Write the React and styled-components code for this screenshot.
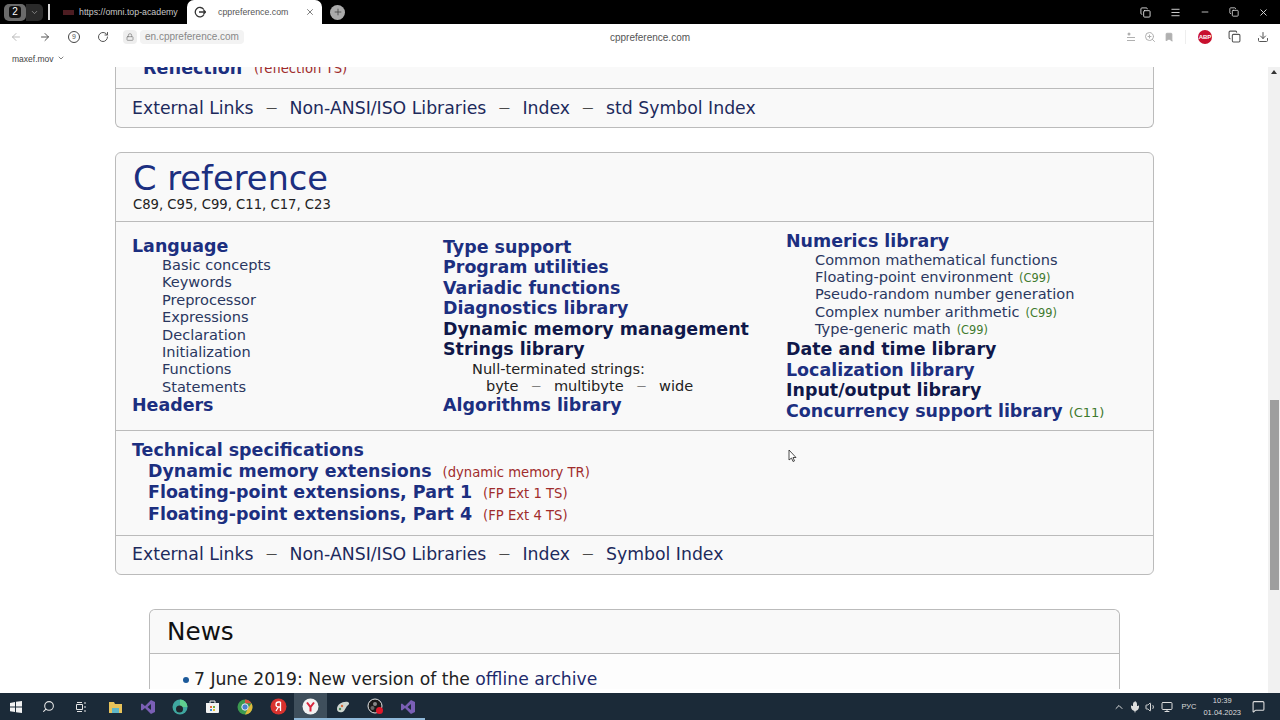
import React from "react"
import styled, { createGlobalStyle } from "styled-components"
import { ArrowLeft, ArrowRight, RotateCw, Lock, X, Plus, ChevronDown, Minus, Menu, Bookmark, Download, Copy, ZoomIn, Search, Volume1, Monitor, ChevronUp, Mic, MessageSquare } from "lucide-react"

const GlobalStyle = createGlobalStyle`
    html, body { margin: 0; padding: 0; height: 100%; overflow: hidden; }
    body { font-family: "DejaVu Sans", sans-serif; background: #fff; }
    #root { height: 100%; }
    * { box-sizing: border-box; }
`

const Screen = styled.div`
    position: relative;
    width: 1280px;
    height: 720px;
    display: flex;
    flex-direction: column;
    overflow: hidden;
`

const TabBar = styled.div`
    height: 24px;
    background: #000;
    display: flex;
    align-items: center;
    color: #ddd;
    padding-left: 4px;
`

const Counter = styled.div`
    width: 22px;
    height: 17px;
    border-radius: 5px;
    background: #6b6b6b;
    display: flex;
    align-items: center;
    justify-content: center;
    span {
        width: 12px;
        height: 12px;
        border-radius: 3px;
        background: #111;
        color: #fff;
        font: 10px/12px "Liberation Sans", sans-serif;
        text-align: center;
    }
`

const CounterMenu = styled.div`
    width: 17px;
    height: 17px;
    background: #2a2a2a;
    border-radius: 0 5px 5px 0;
    display: flex;
    align-items: center;
    justify-content: center;
    color: #999;
`

const Divider = styled.div`
    width: 2px;
    height: 16px;
    background: #d8d8d8;
    margin: 0 13px 0 5px;
`

const PassiveTab = styled.div`
    width: 124px;
    display: flex;
    align-items: center;
    gap: 5px;
    font: 8.8px "Liberation Sans", sans-serif;
    color: #c8c8c8;
    white-space: nowrap;
    overflow: hidden;
    i {
        display: block;
        flex: none;
        width: 11px;
        height: 5px;
        background: #4d1d22;
    }
`

const ActiveTab = styled.div`
    width: 135px;
    height: 24px;
    background: #fff;
    border-radius: 7px 7px 0 0;
    display: flex;
    align-items: center;
    padding: 0 7px 0 7px;
    color: #333;
    font: 8.8px "Liberation Sans", sans-serif;
    span { flex: 1; padding-left: 12px; color: #555; }
`

const NewTab = styled.div`
    width: 15px;
    height: 15px;
    margin-left: 8px;
    border-radius: 50%;
    background: #aaa;
    color: #444;
    display: flex;
    align-items: center;
    justify-content: center;
`

const WindowControls = styled.div`
    margin-left: auto;
    display: flex;
    align-items: center;
    color: #ddd;
    padding-right: 11px;
    gap: 19px;
`

const Toolbar = styled.div`
    height: 24px;
    background: #fff;
    border-radius: 7px 7px 0 0;
    display: flex;
    align-items: center;
    padding: 1px 11px 0 10px;
    color: #444;
    position: relative;
`

const NavGroup = styled.div`
    display: flex;
    align-items: center;
    gap: 17px;
    color: #555;
`

const SiteBadge = styled.div`
    width: 12px;
    height: 12px;
    border-radius: 50%;
    border: 1px solid #444;
    font: 7px/10px "Liberation Sans", sans-serif;
    text-align: center;
`

const LockPill = styled.div`
    margin-left: 14px;
    width: 14px;
    height: 14px;
    background: #eeeeee;
    border-radius: 4px;
    display: flex;
    align-items: center;
    justify-content: center;
    color: #777;
`

const Address = styled.div`
    margin-left: 3px;
    height: 14px;
    padding: 0 5px;
    background: #f3f3f3;
    border-radius: 4px;
    display: flex;
    align-items: center;
    color: #888;
    font: 10px "Liberation Sans", sans-serif;
`

const PageTitle = styled.div`
    position: absolute;
    left: 610px;
    top: 8px;
    font: 10px "Liberation Sans", sans-serif;
    color: #555;
`

const ToolIcons = styled.div`
    margin-left: auto;
    display: flex;
    align-items: center;
    gap: 8px;
    color: #b0b0b0;
`

const DarkIcons = styled.div`
    display: flex;
    align-items: center;
    gap: 16px;
    color: #555;
    margin-left: 3px;
    padding-left: 12px;
    border-left: 1px solid #eee;
`

const AdBlock = styled.div`
    width: 14px;
    height: 14px;
    border-radius: 50%;
    background: #c8102e;
    color: #fff;
    font: bold 6px/14px "Liberation Sans", sans-serif;
    text-align: center;
`

const Bookmarks = styled.div`
    height: 19px;
    background: #fff;
    padding: 6px 0 0 12px;
    font: 8.5px "Liberation Sans", sans-serif;
    color: #444;
    display: flex;
    align-items: flex-start;
    gap: 3px;
`

const Viewport = styled.div`
    flex: 1;
    min-height: 0;
    display: flex;
    overflow: hidden;
`

const Page = styled.div`
    flex: 1;
    min-width: 0;
    overflow: hidden;
    padding-left: 115px;
`

const Card = styled.div`
    width: 1039px;
    background: #f9f9f9;
    border: 1px solid #bbb;
    border-radius: 6px;
    margin-bottom: 24px;
`

const ClippedCard = styled(Card)`
    margin-top: -18px;
    border-top: 0;
    border-radius: 0 0 6px 6px;
`

const ClippedRow = styled.div`
    height: 40px;
    padding-left: 27px;
    display: flex;
    align-items: center;
    gap: 6px;
    border-bottom: 1px solid #bbb;
`

const Footer = styled.div`
    height: 38px;
    padding: 0 0 ${(p) => p.$lift || 0}px 16px;
    display: flex;
    align-items: center;
    font-size: 17.3px;
    color: #1d2a5c;
    white-space: pre;
`

const Dash = styled.span`
    margin: 0 ${(p) => p.$space || 12.4}px;
    font-size: 0.65em;
    line-height: 0;
    vertical-align: 0.2em;
    color: #222;
`

const Header = styled.div`
    height: 69px;
    padding: 6px 0 0 17px;
    border-bottom: 1px solid #bbb;
`

const Title = styled.div`
    font-size: 33.7px;
    line-height: 40px;
    color: #1c2f80;
`

const Versions = styled.div`
    margin-top: -2px;
    font-size: 13.2px;
    line-height: 15px;
    color: #222;
`

const Columns = styled.div`
    height: 209px;
    display: grid;
    grid-template-columns: 311px 343px 1fr;
    padding-left: 16px;
    border-bottom: 1px solid #bbb;
`

const Column = styled.div`
    padding-top: ${(p) => p.$top}px;
`

const Strong = styled.div`
    font-size: 17.45px;
    font-weight: bold;
    line-height: ${(p) => p.$line || 20.5}px;
    white-space: nowrap;
    color: ${(p) => (p.$dark ? "#10184a" : "#1c2f80")};
    margin-left: ${(p) => p.$indent || 0}px;
`

const Sub = styled.div`
    font-size: 14.55px;
    line-height: 17.4px;
    white-space: nowrap;
    color: #2a3760;
    margin-left: ${(p) => p.$indent}px;
`

const DarkSub = styled(Sub)`
    color: #222;
`

const Tag = styled.span`
    font-size: 13.2px;
    font-weight: normal;
    line-height: 0;
    margin-left: ${(p) => p.$gap || 6}px;
    color: #a02c2c;
`

const StdTag = styled(Tag)`
    font-size: ${(p) => p.$size || 11.4}px;
    color: #3f7a2e;
`

const Specs = styled.div`
    height: 105px;
    padding: 9px 0 0 16px;
    border-bottom: 1px solid #bbb;
`

const News = styled.div`
    width: 971px;
    margin: 34px 0 0 34px;
    border: 1px solid #bbb;
    border-bottom: 0;
    border-radius: 6px 6px 0 0;
    background: #fdfdfd;
`

const NewsHead = styled.div`
    height: 44px;
    padding-left: 17px;
    background: #f9f9f9;
    border-radius: 6px 6px 0 0;
    border-bottom: 1px solid #bbb;
    font-size: 24.7px;
    line-height: 43px;
    color: #111;
`

const NewsItem = styled.div`
    padding: 15px 0 0 33px;
    font-size: 17.2px;
    line-height: 20px;
    color: #222;
    white-space: nowrap;
    &::before {
        content: "";
        display: inline-block;
        width: 6px;
        height: 6px;
        margin-right: 5px;
        border-radius: 50%;
        background: #1c5a9a;
        vertical-align: 2px;
    }
    a { color: #1d2a6c; }
`

const Scrollbar = styled.div`
    width: 12px;
    background: #f1f1f1;
    padding-top: 333px;
    display: flex;
    justify-content: center;
    position: relative;
    &::before {
        content: "";
        position: absolute;
        top: 3px;
        left: 3px;
        border: 3px solid transparent;
        border-top: 0;
        border-bottom: 4px solid #333;
    }
`

const Thumb = styled.div`
    width: 9px;
    height: 190px;
    background: #9e9e9e;
`

const Taskbar = styled.div`
    height: 27px;
    background: #1b2a38;
    display: flex;
    align-items: center;
    color: #e6e6e6;
`

const TaskSlot = styled.div`
    width: 32.6px;
    height: 27px;
    padding-top: 2px;
    display: flex;
    align-items: center;
    justify-content: center;
    flex: none;
    margin-right: ${(p) => p.$gap || 0}px;
    background: ${(p) => (p.$active ? "#3f4f5c" : "transparent")};
    border-bottom: 2px solid ${(p) => (p.$open ? "#8fb8d8" : "transparent")};
`

const Tray = styled.div`
    margin-left: auto;
    display: flex;
    align-items: center;
    gap: 4px;
    padding-right: 15px;
    color: #ddd;
`

const TrayText = styled.div`
    font: 7.5px "Liberation Sans", sans-serif;
    margin: 0 3px 0 4px;
`

const Clock = styled.div`
    font: 7.5px/12px "Liberation Sans", sans-serif;
    text-align: center;
    margin-right: 7px;
`

const Pointer = styled.svg`
    position: absolute;
    left: 788px;
    top: 449px;
`

const VsLogo = () => (
    <svg width="16" height="16" viewBox="0 0 16 16">
        <path d="M11 1l4 2v10l-4 2-6-6-3 2.500L1 11V5l1-.5L5 7z" fill="#7a5fb5" />
        <path d="M11 5L7.500 8 11 11z" fill="#1b2a38" />
    </svg>
)

export default function App() {
    return (
        <Screen>
            <GlobalStyle />
            <TabBar>
                <Counter><span>2</span></Counter>
                <CounterMenu><ChevronDown size={9} /></CounterMenu>
                <Divider />
                <PassiveTab><i />https://omni.top-academy</PassiveTab>
                <ActiveTab>
                    <svg width="12" height="12" viewBox="0 0 12 12" fill="none" stroke="#333" strokeWidth="1.300">
                        <path d="M9.800 3.500A4.700 4.700 0 1 0 10 8.500M5 6h6.500M9.500 4l2 2-2 2" />
                    </svg>
                    <span>cppreference.com</span>
                    <X size={10} color="#666" />
                </ActiveTab>
                <NewTab><Plus size={10} /></NewTab>
                <WindowControls>
                    <Copy size={11} />
                    <Menu size={11} />
                    <Minus size={10} />
                    <Copy size={10} />
                    <X size={11} />
                </WindowControls>
            </TabBar>
            <Toolbar>
                <NavGroup>
                    <ArrowLeft size={12} color="#bbb" />
                    <ArrowRight size={12} />
                    <SiteBadge>9</SiteBadge>
                    <RotateCw size={12} />
                </NavGroup>
                <LockPill><Lock size={8} /></LockPill>
                <Address>en.cppreference.com</Address>
                <PageTitle>cppreference.com</PageTitle>
                <ToolIcons>
                    <svg width="10" height="10" viewBox="0 0 10 10" fill="#b0b0b0">
                        <circle cx="3" cy="2" r="1.500" />
                        <path d="M1 5h8v1H1zM1 8h8v1H1z" />
                    </svg>
                    <ZoomIn size={12} />
                    <Bookmark size={10} fill="#b0b0b0" />
                    <DarkIcons>
                        <AdBlock>ABP</AdBlock>
                        <Copy size={13} />
                        <Download size={12} />
                    </DarkIcons>
                </ToolIcons>
            </Toolbar>
            <Bookmarks>maxef.mov <ChevronDown size={8} /></Bookmarks>
            <Viewport>
                <Page>
                    <ClippedCard>
                        <ClippedRow>
                            <Strong $line={17}>Reflection</Strong>
                            <Tag>(reflection TS)</Tag>
                        </ClippedRow>
                        <Footer>
                            External Links<Dash>—</Dash>Non-ANSI/ISO Libraries<Dash>—</Dash>Index<Dash>—</Dash>std Symbol Index
                        </Footer>
                    </ClippedCard>
                    <Card>
                        <Header>
                            <Title>C reference</Title>
                            <Versions>C89, C95, C99, C11, C17, C23</Versions>
                        </Header>
                        <Columns>
                            <Column $top={14.5}>
                                <Strong $line={19.5}>Language</Strong>
                                <Sub $indent={30}>Basic concepts</Sub>
                                <Sub $indent={30}>Keywords</Sub>
                                <Sub $indent={30}>Preprocessor</Sub>
                                <Sub $indent={30}>Expressions</Sub>
                                <Sub $indent={30}>Declaration</Sub>
                                <Sub $indent={30}>Initialization</Sub>
                                <Sub $indent={30}>Functions</Sub>
                                <Sub $indent={30}>Statements</Sub>
                                <Strong>Headers</Strong>
                            </Column>
                            <Column $top={14.8}>
                                <Strong>Type support</Strong>
                                <Strong>Program utilities</Strong>
                                <Strong>Variadic functions</Strong>
                                <Strong>Diagnostics library</Strong>
                                <Strong $dark>Dynamic memory management</Strong>
                                <Strong $dark>Strings library</Strong>
                                <DarkSub $indent={29}>Null-terminated strings:</DarkSub>
                                <DarkSub $indent={43}>byte<Dash $space={13}>—</Dash>multibyte<Dash $space={13}>—</Dash>wide</DarkSub>
                                <Strong>Algorithms library</Strong>
                            </Column>
                            <Column $top={9.5}>
                                <Strong $line={19}>Numerics library</Strong>
                                <Sub $indent={29}>Common mathematical functions</Sub>
                                <Sub $indent={29}>Floating-point environment<StdTag>(C99)</StdTag></Sub>
                                <Sub $indent={29}>Pseudo-random number generation</Sub>
                                <Sub $indent={29}>Complex number arithmetic<StdTag>(C99)</StdTag></Sub>
                                <Sub $indent={29}>Type-generic math<StdTag>(C99)</StdTag></Sub>
                                <Strong $dark $line={22}>Date and time library</Strong>
                                <Strong>Localization library</Strong>
                                <Strong $dark>Input/output library</Strong>
                                <Strong>Concurrency support library<StdTag $size={13}>(C11)</StdTag></Strong>
                            </Column>
                        </Columns>
                        <Specs>
                            <Strong>Technical specifications</Strong>
                            <Strong $indent={16} $line={21.6}>Dynamic memory extensions<Tag $gap={11}>(dynamic memory TR)</Tag></Strong>
                            <Strong $indent={16} $line={21.6}>Floating-point extensions, Part 1<Tag $gap={11}>(FP Ext 1 TS)</Tag></Strong>
                            <Strong $indent={16} $line={21.6}>Floating-point extensions, Part 4<Tag $gap={11}>(FP Ext 4 TS)</Tag></Strong>
                        </Specs>
                        <Footer $lift={2}>
                            External Links<Dash>—</Dash>Non-ANSI/ISO Libraries<Dash>—</Dash>Index<Dash>—</Dash>Symbol Index
                        </Footer>
                    </Card>
                    <News>
                        <NewsHead>News</NewsHead>
                        <NewsItem>7 June 2019: New version of the <a>offline archive</a></NewsItem>
                    </News>
                </Page>
                <Scrollbar><Thumb /></Scrollbar>
            </Viewport>
            <Taskbar>
                <TaskSlot>
                    <svg width="12" height="12" viewBox="0 0 12 12" fill="#f2f2f2">
                        <path d="M0 2l5-1v4.500H0zM6 .8L12 0v5.500H6zM0 6.500h5V11l-5-.8zM6 6.500h6V12l-6-.8z" />
                    </svg>
                </TaskSlot>
                <TaskSlot><Search size={13} style={{ transform: "scaleX(-1)" }} /></TaskSlot>
                <TaskSlot $gap={1}>
                    <svg width="12" height="12" viewBox="0 0 12 12" fill="none" stroke="#e6e6e6">
                        <path d="M1.500 3.500h6v5h-6zM2 1.500h5M2 10.500h5M10 1v2M10 5v2M10 9v2" />
                    </svg>
                </TaskSlot>
                <TaskSlot>
                    <svg width="15" height="14" viewBox="0 0 15 14">
                        <path d="M1 2h5l1 2h7v9H1z" fill="#e8c35a" />
                        <path d="M4 8h7v5H4z" fill="#5fb7c9" />
                    </svg>
                </TaskSlot>
                <TaskSlot><VsLogo /></TaskSlot>
                <TaskSlot>
                    <svg width="16" height="16" viewBox="0 0 16 16">
                        <circle cx="8" cy="8" r="7.500" fill="#3fa7a0" />
                        <path d="M8 .5a7.500 7.500 0 0 1 7.500 7.500H8z" fill="#5fcf8f" />
                        <circle cx="7.500" cy="10" r="3.500" fill="#20252c" />
                    </svg>
                </TaskSlot>
                <TaskSlot>
                    <svg width="15" height="15" viewBox="0 0 15 15">
                        <path d="M1 4h13v9a1 1 0 0 1-1 1H2a1 1 0 0 1-1-1z" fill="#f2f2f2" />
                        <path d="M5 4V2h5v2" fill="none" stroke="#f2f2f2" />
                        <path d="M5 7h2v2H5z" fill="#e0683a" />
                        <path d="M8 7h2v2H8z" fill="#6fae3c" />
                        <path d="M5 10h2v2H5z" fill="#3d8fd8" />
                        <path d="M8 10h2v2H8z" fill="#e8c02e" />
                    </svg>
                </TaskSlot>
                <TaskSlot>
                    <svg width="16" height="16" viewBox="0 0 16 16">
                        <circle cx="8" cy="8" r="7.500" fill="#3c9a50" />
                        <path d="M8 .5a7.500 7.500 0 0 1 6.500 3.800H8z" fill="#d9503f" />
                        <path d="M14.500 4.300A7.500 7.500 0 0 1 8 15.500l3-6z" fill="#e2b93b" />
                        <circle cx="8" cy="8" r="3.200" fill="#4a80d0" stroke="#eee" />
                    </svg>
                </TaskSlot>
                <TaskSlot>
                    <svg width="17" height="17" viewBox="0 0 17 17">
                        <circle cx="8.500" cy="8.500" r="8" fill="#d8322e" />
                        <path d="M10.500 4v9M10.500 4H8.500a2.400 2.400 0 0 0 0 5h2M8.500 9L6 13" fill="none" stroke="#fff" strokeWidth="1.300" />
                    </svg>
                </TaskSlot>
                <TaskSlot $active $open>
                    <svg width="17" height="17" viewBox="0 0 17 17">
                        <circle cx="8.500" cy="8.500" r="8" fill="#f2f2f2" />
                        <path d="M5 4.500l3.500 4.500 3.500-4.500M8.500 9v4.500" fill="none" stroke="#d8243c" strokeWidth="2" />
                    </svg>
                </TaskSlot>
                <TaskSlot $open>
                    <svg width="17" height="16" viewBox="0 0 17 16">
                        <path d="M2 10c0-5 6-8 11-7 2 1 1 3-1 4l-3 5c-2 2-7 2-7-2z" fill="#cfd6cf" />
                        <circle cx="7" cy="7" r="1.200" fill="#d86a3a" />
                        <circle cx="5" cy="10" r="1.200" fill="#4a8a5a" />
                    </svg>
                </TaskSlot>
                <TaskSlot $open>
                    <svg width="17" height="17" viewBox="0 0 17 17">
                        <circle cx="8" cy="8" r="7" fill="#1a1a1a" stroke="#e6e6e6" />
                        <circle cx="8" cy="6" r="2" fill="#888" />
                        <circle cx="5.500" cy="10" r="2" fill="#666" />
                        <circle cx="12.500" cy="12.500" r="3.500" fill="#e0182a" />
                    </svg>
                </TaskSlot>
                <TaskSlot $open><VsLogo /></TaskSlot>
                <Tray>
                    <ChevronUp size={12} />
                    <Mic size={12} fill="#ddd" />
                    <Volume1 size={12} />
                    <Monitor size={12} />
                    <TrayText>РУС</TrayText>
                    <Clock>10:39<br />01.04.2023</Clock>
                    <MessageSquare size={13} />
                </Tray>
            </Taskbar>
            <Pointer width="10" height="14" viewBox="0 0 10 14">
                <path d="M1 1v10l2.500-2 1.500 3.500 1.500-.6L5 8.500h3z" fill="#fff" stroke="#222" strokeWidth="0.800" />
            </Pointer>
        </Screen>
    )
}
